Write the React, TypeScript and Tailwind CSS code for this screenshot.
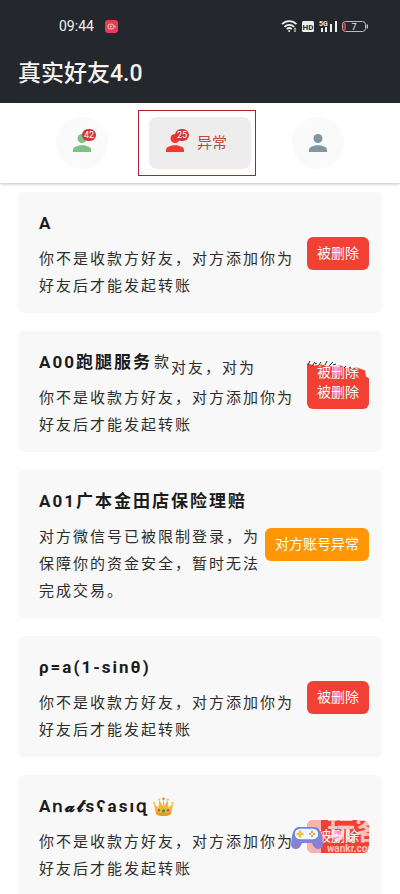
import React, { useState } from 'react';
import clsx from 'clsx';

type Status = 'deleted' | 'abnormal';

interface Contact {
  id: number;
  name: string;
  message: string;
  status: Status;
  glitch?: boolean;
  crown?: boolean;
  watermark?: boolean;
}

const NOT_FRIEND = '你不是收款方好友，对方添加你为好友后才能发起转账';

const CONTACTS: Contact[] = [
  { id: 1, name: 'A', message: NOT_FRIEND, status: 'deleted' },
  { id: 2, name: 'A00跑腿服务', message: NOT_FRIEND, status: 'deleted', glitch: true },
  {
    id: 3,
    name: 'A01广本金田店保险理赔',
    message: '对方微信号已被限制登录，为保障你的资金安全，暂时无法完成交易。',
    status: 'abnormal',
  },
  { id: 4, name: 'ρ=a(1-sinθ)', message: NOT_FRIEND, status: 'deleted' },
  { id: 5, name: 'Aո𝓪𝓽sʕasıզ', message: NOT_FRIEND, status: 'deleted', crown: true, watermark: true },
];

const TABS = [
  { id: 'normal', label: '正常', count: 42, color: 'text-[#7cc284]' },
  { id: 'abnormal', label: '异常', count: 25, color: 'text-[#f2382c]' },
  { id: 'other', label: '未检测', count: 0, color: 'text-[#7f979f]' },
];

const StatusBar: React.FC = () => (
  <div className="flex h-[52px] items-center justify-between pr-[31px] pl-[59px]">
    <div className="flex items-center gap-[11px]">
      <span className="text-[14px] leading-5 text-[#f1f1f1]">09:44</span>
      <svg width="13" height="13" viewBox="0 0 13 13">
        <rect width="13" height="13" rx="3" fill="#e93a59" />
        <rect x="3" y="4.2" width="5.6" height="4.8" rx="1.8" fill="none" stroke="#f7c9a6" strokeWidth="1" />
        <circle cx="5.8" cy="6.6" r="1" fill="#f7c9a6" />
        <path d="M8.6 6.6l1.8-1.3v2.6z" fill="#f7c9a6" />
      </svg>
    </div>
    <svg width="88" height="16" viewBox="0 0 88 16" fontFamily="Roboto, sans-serif">
      <g fill="none" stroke="#eceeef" strokeWidth="1.8">
        <path d="M1 6.2c4-4.2 10.5-4.2 14.5 0" />
        <path d="M3.4 8.8c2.800-2.700 7-2.700 9.800 0" />
        <path d="M5.8 11.2c1.500-1.400 3.500-1.400 5 0" />
      </g>
      <circle cx="8.2" cy="13" r="1" fill="#eceeef" />
      <path d="M12.6 11.4l1.4-1.8 1.4 1.8zM12.6 12.4l1.4 1.8 1.4-1.8z" fill="#eceeef" />
      <rect x="21" y="3" width="12" height="11" rx="1.5" fill="#eceeef" />
      <text x="27" y="11.6" fontSize="8" fontWeight="700" textAnchor="middle" fill="#24272b">HD</text>
      <text x="38" y="7.5" fontSize="7" fontWeight="700" fill="#eceeef">5G</text>
      <path d="M40 10h2v4h-2zM44 9h2v5h-2zM49 6h2v8h-2zM54 3h2v11h-2z" fill="#eceeef" />
      <rect x="61.5" y="3.5" width="23" height="10" rx="3" fill="none" stroke="#b9bcbe" />
      <path d="M85.5 6.5h1.5v4h-1.5z" fill="#b9bcbe" />
      <path d="M65 5v7h-1.5a1 1 0 0 1-1-1V6a1 1 0 0 1 1-1z" fill="#c93a46" />
      <text x="73" y="11.8" fontSize="9" textAnchor="middle" fill="#eceeef">7</text>
    </svg>
  </div>
);

const PersonIcon: React.FC<{ color: string; count: number }> = ({ color, count }) => (
  <span className={clsx('relative block h-[18px] w-[18px]', color)}>
    <svg width="18" height="18" viewBox="0 0 18 18" fill="currentColor">
      <circle cx="9" cy="4.5" r="4.5" />
      <path d="M0 18v-2.2c0-3 5-4.6 9-4.6s9 1.6 9 4.6V18z" />
    </svg>
    {count > 0 && (
      <span className="absolute -top-[5px] left-[9px] flex h-3 w-[14px] items-center justify-center rounded-full bg-[#cf3a37] text-[9px] leading-3 text-white">
        {count}
      </span>
    )}
  </span>
);

const Crown: React.FC = () => (
  <svg width="21" height="20" viewBox="0 0 21 20" role="img" aria-label="crown">
    <path d="M3 17L.8 6.5l4.6 4.2L6.4 3l3.2 6.2.9-7.4.9 7.4L14.6 3l1 7.7 4.6-4.2L18 17c-4 2.4-11 2.4-15 0z" fill="#f5b53a" />
    <path d="M3 14.5c4 2 11 2 15 0l-.5 3c-4 2-10 2-14 0z" fill="#e79a25" />
    <g fill="#f7c64e">
      <circle cx="1.3" cy="6" r="1.2" />
      <circle cx="6.2" cy="2.6" r="1.2" />
      <circle cx="14.8" cy="2.6" r="1.2" />
      <circle cx="19.7" cy="6" r="1.2" />
    </g>
    <circle cx="10.5" cy="1.7" r="1.3" fill="#e8803a" />
    <circle cx="10.5" cy="14" r="1.7" fill="#3f9a58" />
    <circle cx="6" cy="13.3" r="1.2" fill="#d9463e" />
    <circle cx="15" cy="13.3" r="1.2" fill="#d9463e" />
  </svg>
);

const Tag: React.FC<{ status: Status }> = ({ status }) => (
  <span
    className={clsx(
      'block rounded-md px-[10px] text-[14px] leading-[33px] whitespace-nowrap text-white',
      status === 'deleted' ? 'bg-[#f24034]' : 'bg-[#ff9606]'
    )}
  >
    {status === 'deleted' ? '被删除' : '对方账号异常'}
  </span>
);

// Leftover frame drawn above the tag
const GhostTag: React.FC = () => (
  <div aria-hidden="true" className="absolute -top-[16px] left-0 h-[24px] w-full">
    <span className="block h-[24px] bg-[#f24034] pl-[10px] text-[14px] leading-[24px] whitespace-nowrap text-white [clip-path:polygon(0_4px,8px_6px,14px_5px,22px_7px,34px_6px,40px_9px,50px_8px,58px_11px,59px_17px,62px_19px,62px_24px,0_24px)]">
      被删除
    </span>
    <svg width="50" height="10" viewBox="0 0 50 10" className="absolute top-0 left-0" stroke="#2b2b2b" fill="none">
      <path d="M1 5l2-4M5 6l3-4M8 4l2-1M12 5l2-3M18 5l2-4M22 6l4-4M26 5l3-1M37 8l2-2M42 8l2-1" />
    </svg>
  </div>
);

const Watermark: React.FC = () => (
  <div aria-hidden="true" className="absolute -top-[3px] -left-[16px] flex w-[78px] gap-1 overflow-hidden text-white/70">
    <span className="absolute top-[3px] left-[16px] h-[33px] w-[14px] rounded-l-md bg-white/60" />
    <svg width="32" height="28" viewBox="0 0 32 28" className="relative mt-2 shrink-0">
      <path d="M8 2h15c5 0 7 4 8 9l1 8c0 3-2 5-5 5s-5-3-6-6H11c-1 3-3 6-6 6s-5-2-5-5l1-8c1-5 3-9 7-9z" fill="#8b7fd3" />
      <rect x="3" y="3" width="25" height="12" rx="6" fill="#f4f5ff" stroke="#5e8ee8" strokeWidth="1.5" />
      <path d="M9 5.5v7M5.5 9h7" stroke="#f3c431" strokeWidth="2.6" />
      <path d="M21 6v6M18 9h6" stroke="#f0a34f" strokeWidth="2" strokeDasharray="2 2" />
    </svg>
    <div className="flex flex-col">
      <span className="text-[28px] leading-[27px] font-bold whitespace-nowrap">玩客</span>
      <span className="text-[10px] leading-[10px] font-bold">wankr.com</span>
    </div>
  </div>
);

const ContactCard: React.FC<{ contact: Contact }> = ({ contact }) => (
  <li className="flex items-center gap-1 rounded-md bg-[#f8f8f8] pt-[14px] pr-[13px] pb-[13px] pl-[21px]">
    <div className="relative min-w-0 flex-1 pt-1">
      <h2 className="flex items-center gap-1 text-[17px] leading-[27px] font-bold tracking-[2px] text-[#1b1b1b]">
        {contact.name}
        {contact.crown && <Crown />}
      </h2>
      <p className="mt-[9px] text-[15px] leading-[27px] tracking-[2px] text-[#2d2d2d]">{contact.message}</p>
      {contact.glitch && (
        <div aria-hidden="true" className="absolute top-1 left-[115px] flex text-[15px] leading-[27px] tracking-[2px] whitespace-nowrap text-[#2d2d2d]">
          <span>款</span>
          <span className="pt-[6px]">对友，对为</span>
        </div>
      )}
    </div>
    <div className="relative shrink-0">
      <Tag status={contact.status} />
      {contact.glitch && <GhostTag />}
      {contact.watermark && <Watermark />}
    </div>
  </li>
);

const App: React.FC = () => {
  const [activeTab, setActiveTab] = useState('abnormal');

  return (
    <div className="h-screen overflow-hidden bg-white font-[Roboto,'Noto_Sans_CJK_SC',sans-serif]">
      <header className="bg-[#24272b] pb-[11px]">
        <StatusBar />
        <h1 className="px-[18px] pt-1 text-[23px] leading-9 font-medium text-[#f3f3f3]">真实好友4.0</h1>
      </header>

      <nav className="relative flex justify-center gap-[41px] bg-white py-[14px] shadow-[0_1px_3px_rgba(0,0,0,0.25)]">
        {TABS.map(tab => {
          const active = tab.id === activeTab;
          return (
            <div key={tab.id} className="relative">
              <button
                type="button"
                aria-label={tab.label}
                onClick={() => setActiveTab(tab.id)}
                className={clsx(
                  'flex h-[52px] items-center gap-[13px] px-[17px]',
                  active ? 'w-[102px] rounded-lg bg-[#ededed]' : 'w-[52px] rounded-full bg-[#fafafa]'
                )}
              >
                <PersonIcon color={tab.color} count={tab.count} />
                {active && <span className="text-[15px] text-[#c4463d]">{tab.label}</span>}
              </button>
              {active && (
                <span className="pointer-events-none absolute -top-[7px] -right-[5px] -bottom-[7px] -left-[11px] border border-[#b3202b]" />
              )}
            </div>
          );
        })}
      </nav>

      <ul className="flex flex-col gap-[18px] px-[18px] pt-[9px]">
        {CONTACTS.map(contact => (
          <ContactCard key={contact.id} contact={contact} />
        ))}
      </ul>
    </div>
  );
};

export default App;
